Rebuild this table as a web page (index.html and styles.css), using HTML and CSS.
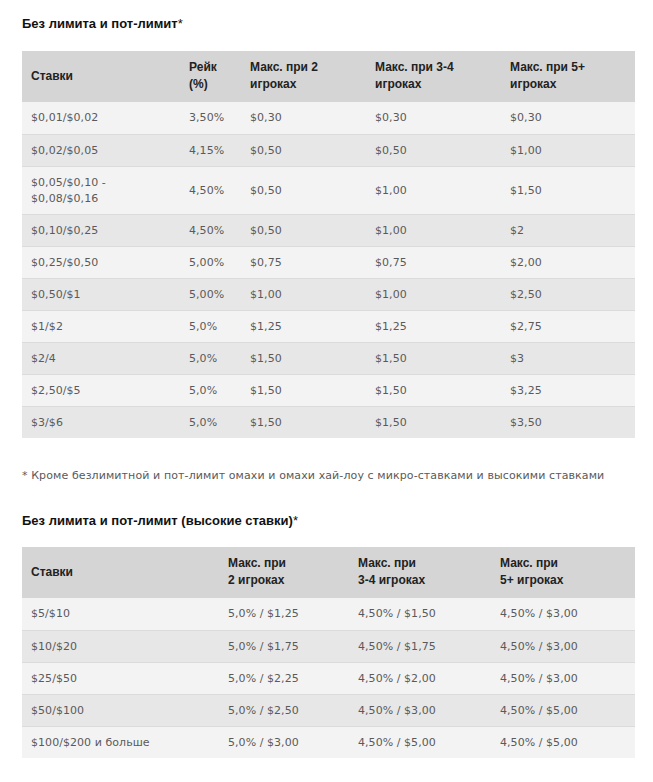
FILE: index.html
```html
<!DOCTYPE html>
<html lang="ru">
<head>
<meta charset="utf-8">
<link rel="stylesheet" href="styles.css">
</head>
<body>
<div class="page">
  <h3 class="title">Без лимита и пот-лимит<span class="star">*</span></h3>
  <table class="rake t1">
    <colgroup>
      <col class="c1-1"><col class="c1-2"><col class="c1-3"><col class="c1-4"><col class="c1-5">
    </colgroup>
    <thead>
      <tr><th>Ставки</th><th>Рейк<br>(%)</th><th>Макс. при 2<br>игроках</th><th>Макс. при 3-4<br>игроках</th><th>Макс. при 5+<br>игроках</th></tr>
    </thead>
    <tbody>
      <tr><td>$0,01/$0,02</td><td>3,50%</td><td>$0,30</td><td>$0,30</td><td>$0,30</td></tr>
      <tr><td>$0,02/$0,05</td><td>4,15%</td><td>$0,50</td><td>$0,50</td><td>$1,00</td></tr>
      <tr><td>$0,05/$0,10 -<br>$0,08/$0,16</td><td>4,50%</td><td>$0,50</td><td>$1,00</td><td>$1,50</td></tr>
      <tr><td>$0,10/$0,25</td><td>4,50%</td><td>$0,50</td><td>$1,00</td><td>$2</td></tr>
      <tr><td>$0,25/$0,50</td><td>5,00%</td><td>$0,75</td><td>$0,75</td><td>$2,00</td></tr>
      <tr><td>$0,50/$1</td><td>5,00%</td><td>$1,00</td><td>$1,00</td><td>$2,50</td></tr>
      <tr><td>$1/$2</td><td>5,0%</td><td>$1,25</td><td>$1,25</td><td>$2,75</td></tr>
      <tr><td>$2/4</td><td>5,0%</td><td>$1,50</td><td>$1,50</td><td>$3</td></tr>
      <tr><td>$2,50/$5</td><td>5,0%</td><td>$1,50</td><td>$1,50</td><td>$3,25</td></tr>
      <tr><td>$3/$6</td><td>5,0%</td><td>$1,50</td><td>$1,50</td><td>$3,50</td></tr>
    </tbody>
  </table>
  <p class="note">* Кроме безлимитной и пот-лимит омахи и омахи хай-лоу с микро-ставками и высокими ставками</p>
  <h3 class="title title2">Без лимита и пот-лимит (высокие ставки)<span class="star">*</span></h3>
  <table class="rake t2">
    <colgroup>
      <col class="c2-1"><col class="c2-2"><col class="c2-3"><col class="c2-4">
    </colgroup>
    <thead>
      <tr><th>Ставки</th><th>Макс. при<br>2 игроках</th><th>Макс. при<br>3-4 игроках</th><th>Макс. при<br>5+ игроках</th></tr>
    </thead>
    <tbody>
      <tr><td>$5/$10</td><td>5,0% / $1,25</td><td>4,50% / $1,50</td><td>4,50% / $3,00</td></tr>
      <tr><td>$10/$20</td><td>5,0% / $1,75</td><td>4,50% / $1,75</td><td>4,50% / $3,00</td></tr>
      <tr><td>$25/$50</td><td>5,0% / $2,25</td><td>4,50% / $2,00</td><td>4,50% / $3,00</td></tr>
      <tr><td>$50/$100</td><td>5,0% / $2,50</td><td>4,50% / $3,00</td><td>4,50% / $5,00</td></tr>
      <tr><td>$100/$200 и больше</td><td>5,0% / $3,00</td><td>4,50% / $5,00</td><td>4,50% / $5,00</td></tr>
    </tbody>
  </table>
</div>
</body>
</html>
```

FILE: styles.css
```css
html, body {
  margin: 0;
  padding: 0;
  background: #ffffff;
}

.page {
  padding: 16px 18px 0 22px;
  font-family: "DejaVu Sans", Verdana, sans-serif;
  color: #5a5a5a;
}

.title {
  margin: 0;
  font-family: "Liberation Sans", Arial, sans-serif;
  font-size: 13px;
  font-weight: bold;
  line-height: 16px;
  color: #111111;
}

.title .star {
  font-weight: normal;
}

.rake {
  border-collapse: collapse;
  width: 613px;
  table-layout: fixed;
  margin-top: 19px;
}

.t2 {
  margin-top: 18px;
}

.rake th {
  background: #d5d5d5;
  font-family: "Liberation Sans", Arial, sans-serif;
  font-size: 12px;
  font-weight: bold;
  line-height: 17px;
  color: #222222;
  text-align: left;
  padding: 8px 9px 9px 9px;
  vertical-align: middle;
}

.rake td {
  font-size: 11px;
  line-height: 16px;
  padding: 8px 9px 7px 9px;
  border-top: 1px solid #dcdbdb;
  vertical-align: middle;
  white-space: nowrap;
  letter-spacing: 0.05px;
}

.rake tbody tr:nth-child(odd) td {
  background: #f4f3f3;
}

.rake tbody tr:nth-child(even) td {
  background: #e8e7e7;
}

.rake tbody tr:first-child td {
  border-top: none;
  padding-top: 8px;
  padding-bottom: 8px;
}

.c1-1 { width: 158px; }
.c1-2 { width: 61px; }
.c1-3 { width: 125px; }
.c1-4 { width: 135px; }
.c1-5 { width: 134px; }

.c2-1 { width: 197px; }
.c2-2 { width: 130px; }
.c2-3 { width: 142px; }
.c2-4 { width: 144px; }

.note {
  margin: 30px 0 29px 0;
  font-size: 11px;
  line-height: 16px;
  letter-spacing: 0.1px;
  color: #5a5a5a;
}
```
